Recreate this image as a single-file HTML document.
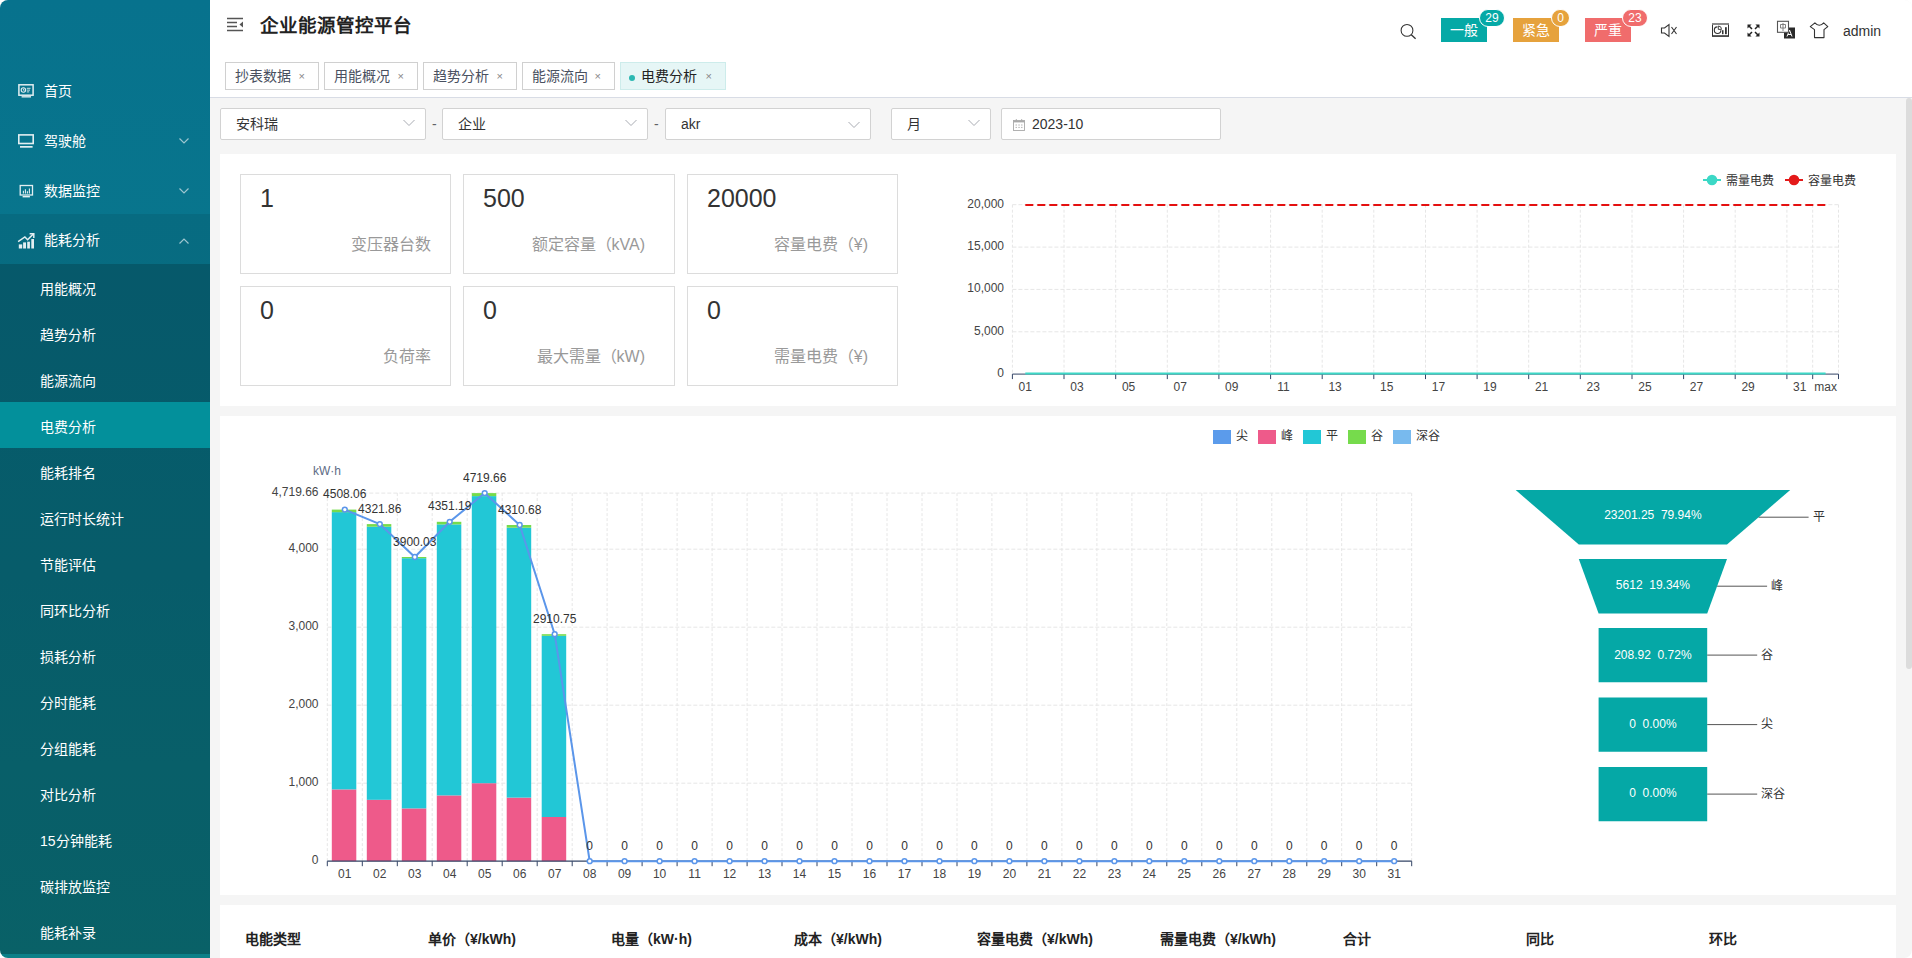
<!DOCTYPE html>
<html lang="zh-CN">
<head>
<meta charset="utf-8">
<style>
*{box-sizing:border-box;margin:0;padding:0}
html,body{width:1912px;height:958px;overflow:hidden;background:#fff}
body{font-family:"Liberation Sans",sans-serif;color:#333;position:relative}
.abs{position:absolute}
#app{position:absolute;left:0;top:0;width:1912px;height:958px;border-radius:8px;overflow:hidden;background:#f5f5f5}
/* sidebar */
#side{position:absolute;left:0;top:0;width:210px;height:958px;background:linear-gradient(180deg,#07728d 0%,#0a7a8c 60%,#0c8088 100%)}
.mi{position:absolute;left:0;width:210px;height:50px;color:#fff;font-size:14px;line-height:50px}
.mi .t{position:absolute;left:44px;top:1px}
.mi svg.ic{position:absolute;left:17px;top:19px;overflow:visible}
.mi .chev{position:absolute;left:179px;top:23px;width:10px;height:6px}
#sub{position:absolute;left:0;top:264px;width:210px;height:690px;background:rgba(0,0,0,0.24)}
.si{position:absolute;left:0;width:210px;height:46px;line-height:46px;color:#fff;font-size:14px;padding-left:40px;padding-top:2px}
.si.act{background:#03909b}
/* main */
#hdr{position:absolute;left:210px;top:0;width:1702px;height:97px;background:#fff}
#hdrline{position:absolute;left:210px;top:97px;width:1702px;height:1px;background:#d8dce5}
.tab{position:absolute;top:62px;height:28px;border:1px solid #d0d0d0;background:#fff;font-size:14px;color:#495060;line-height:26px;padding-left:9px}
.tab .x{position:absolute;right:13px;top:0;font-size:11px;color:#888}
.tab.act{background:#e6f6f6;border-color:#cdeceb;color:#222}
.sel{position:absolute;top:108px;height:32px;border:1px solid #d2d2d2;border-radius:2px;background:#fff;font-size:14px;color:#333;line-height:30px;padding-left:15px}
.dash{position:absolute;top:108px;line-height:32px;font-size:14px;color:#606266}
.card{position:absolute;left:220px;width:1676px;background:#fff}
.stat{position:absolute;width:211px;height:100px;border:1px solid #dcdcdc;background:#fff}
.stat .n{position:absolute;left:19px;top:9px;font-size:25px;color:#333}
.stat .l{position:absolute;right:19px;top:56px;font-size:16px;color:#999;white-space:nowrap}
.th{position:absolute;top:930px;font-size:14px;font-weight:bold;color:#222;line-height:18px;white-space:nowrap}
#sb{position:absolute;left:1906px;top:98px;width:6px;height:571px;border-radius:3px;background:#dcdcdc}
</style>
</head>
<body>
<div id="app">
  <div id="side">
    <div class="mi" style="top:65px">
      <svg class="ic" width="19" height="16" viewBox="0 0 19 16"><rect x="1.9" y="0.8" width="14.2" height="10.4" fill="none" stroke="#e3eef1" stroke-width="1.5"/><rect x="4.6" y="12" width="9.4" height="1.6" fill="#e3eef1" opacity="0.85"/><circle cx="6.4" cy="6" r="2.2" fill="none" stroke="#e3eef1" stroke-width="1.1"/><path d="M6.4 4.7V6.2H7.5M9.8 4.3H13.5M9.8 6.1H13M9.8 7.9H12.2" fill="none" stroke="#e3eef1" stroke-width="0.9"/></svg>
      <span class="t">首页</span>
    </div>
    <div class="mi" style="top:115px">
      <svg class="ic" width="19" height="16" viewBox="0 0 19 16"><rect x="1.8" y="0.9" width="14.4" height="8.6" fill="none" stroke="#e3eef1" stroke-width="1.6"/><rect x="3" y="12" width="12.6" height="1.7" fill="#e3eef1"/></svg>
      <span class="t">驾驶舱</span>
      <svg class="chev" viewBox="0 0 10 6"><path d="M0.5 0.5L5 5L9.5 0.5" fill="none" stroke="#9cc5cf" stroke-width="1.2"/></svg>
    </div>
    <div class="mi" style="top:165px">
      <svg class="ic" width="19" height="16" viewBox="0 0 19 16"><rect x="3.2" y="1.5" width="12.3" height="9.5" fill="none" stroke="#e3eef1" stroke-width="1.3"/><rect x="5.6" y="12" width="7.3" height="1.4" fill="#e3eef1"/><path d="M6.4 9.6V6.8M8.4 9.6V5.2M10.4 9.6V7.2M12.4 9.6V4.6" stroke="#e3eef1" stroke-width="1.1"/></svg>
      <span class="t">数据监控</span>
      <svg class="chev" viewBox="0 0 10 6"><path d="M0.5 0.5L5 5L9.5 0.5" fill="none" stroke="#9cc5cf" stroke-width="1.2"/></svg>
    </div>
    <div class="mi" style="top:214px;background:rgba(0,0,0,0.08)">
      <svg class="ic" width="19" height="17" viewBox="0 0 19 17"><rect x="1.8" y="11.4" width="3.4" height="4.1" fill="#e3eef1"/><rect x="6.1" y="9.4" width="2.9" height="6.1" fill="#e3eef1"/><rect x="10.2" y="8.7" width="2.7" height="6.8" fill="#e3eef1"/><rect x="14.3" y="6" width="2.7" height="9.5" fill="#e3eef1"/><path d="M1.1 8.7L7.9 4L10.6 6.7L16.4 0.9" fill="none" stroke="#e3eef1" stroke-width="1.5"/><path d="M12.6 0.8H16.8V5" fill="none" stroke="#e3eef1" stroke-width="1.5"/></svg>
      <span class="t">能耗分析</span>
      <svg class="chev" style="top:24px" viewBox="0 0 10 6"><path d="M0.5 5.5L5 1L9.5 5.5" fill="none" stroke="#9cc5cf" stroke-width="1.2"/></svg>
    </div>
    <div id="sub">
      <div class="si" style="top:0">用能概况</div>
      <div class="si" style="top:46px">趋势分析</div>
      <div class="si" style="top:92px">能源流向</div>
      <div class="si act" style="top:138px">电费分析</div>
      <div class="si" style="top:184px">能耗排名</div>
      <div class="si" style="top:230px">运行时长统计</div>
      <div class="si" style="top:276px">节能评估</div>
      <div class="si" style="top:322px">同环比分析</div>
      <div class="si" style="top:368px">损耗分析</div>
      <div class="si" style="top:414px">分时能耗</div>
      <div class="si" style="top:460px">分组能耗</div>
      <div class="si" style="top:506px">对比分析</div>
      <div class="si" style="top:552px">15分钟能耗</div>
      <div class="si" style="top:598px">碳排放监控</div>
      <div class="si" style="top:644px">能耗补录</div>
    </div>
  </div>

  <div id="hdr"></div>
  <div id="hdrline"></div>
  <!-- HEADER CONTENT -->
  <svg class="abs" style="left:227px;top:17px" width="17" height="15" viewBox="0 0 17 15"><path d="M0 1.5H16M0 5.5H10M0 9.5H10M0 13.5H16" stroke="#555" stroke-width="1.6"/><path d="M16 4.5L12.5 7.5L16 10.5Z" fill="#555"/></svg>
  <div class="abs" style="left:260px;top:12px;font-size:18.5px;font-weight:bold;color:#222;line-height:28px;white-space:nowrap">企业能源管控平台</div>
  <svg class="abs" style="left:1399px;top:22px" width="19" height="19" viewBox="0 0 19 19"><circle cx="8" cy="8.4" r="5.9" fill="none" stroke="#333" stroke-width="1.05"/><path d="M12.3 12.7L16.6 16.8" stroke="#333" stroke-width="1.3"/></svg>
  <div class="abs badge" style="left:1441px;top:18px;width:46px;height:24px;background:#05a9a6;color:#fff;font-size:14px;line-height:24px;text-align:center">一般</div>
  <div class="abs" style="left:1479px;top:9px;width:26px;height:18px;border-radius:9px;border:1px solid #fff;background:#05a9a6;color:#fff;font-size:12px;line-height:16px;text-align:center">29</div>
  <div class="abs badge" style="left:1513px;top:18px;width:46px;height:24px;background:#e6a23c;color:#fff;font-size:14px;line-height:24px;text-align:center">紧急</div>
  <div class="abs" style="left:1551px;top:9px;width:19px;height:18px;border-radius:9px;border:1px solid #fff;background:#e6a23c;color:#fff;font-size:12px;line-height:16px;text-align:center">0</div>
  <div class="abs badge" style="left:1585px;top:18px;width:46px;height:24px;background:#f06c6c;color:#fff;font-size:14px;line-height:24px;text-align:center">严重</div>
  <div class="abs" style="left:1622px;top:9px;width:26px;height:18px;border-radius:9px;border:1px solid #fff;background:#f06c6c;color:#fff;font-size:12px;line-height:16px;text-align:center">23</div>
  <svg class="abs" style="left:1660px;top:23px" width="19" height="15" viewBox="0 0 19 15"><path d="M1.5 5H4.5L9 1.5V13.5L4.5 10H1.5Z" fill="none" stroke="#333" stroke-width="1.1"/><path d="M11.5 4L16.5 11M16.5 4L11.5 11" stroke="#333" stroke-width="1.1"/></svg>
  <svg class="abs" style="left:1712px;top:23px" width="17" height="14" viewBox="0 0 17 14"><rect x="0.5" y="1" width="16" height="12" fill="none" stroke="#333" stroke-width="1"/><path d="M0 1H17" stroke="#888" stroke-width="1.6"/><path d="M0 13.1H17" stroke="#333" stroke-width="1.3"/><path d="M5.4 3.9A3.3 3.3 0 1 0 8.9 7.3" fill="none" stroke="#333" stroke-width="1.1"/><path d="M6.3 3V6.4H9.5A3.3 3.3 0 0 0 6.3 3Z" fill="none" stroke="#333" stroke-width="0.9"/><rect x="10" y="7.2" width="1.5" height="4" fill="#333"/><rect x="13" y="4.2" width="1.8" height="7" fill="#333"/></svg>
  <svg class="abs" style="left:1747px;top:24px" width="13" height="13" viewBox="0 0 13 13"><path d="M0.5 0.5H4.6L0.5 4.6ZM12.5 0.5H8.4L12.5 4.6ZM0.5 12.5H4.6L0.5 8.4ZM12.5 12.5H8.4L12.5 8.4Z" fill="#222"/><path d="M1.5 1.5L5 5M11.5 1.5L8 5M1.5 11.5L5 8M11.5 11.5L8 8" stroke="#222" stroke-width="1.5"/></svg>
  <svg class="abs" style="left:1776px;top:20px" width="21" height="20" viewBox="0 0 21 20"><rect x="8" y="7.5" width="11" height="11" fill="#2a2a2a"/><path d="M11 16.5L13.5 10L16 16.5M12 14.5H15" fill="none" stroke="#fff" stroke-width="1"/><rect x="1.5" y="1.3" width="11" height="11" fill="#fff" stroke="#555" stroke-width="1.1"/><path d="M4.5 4.5H9.5V8H4.5ZM7 3V11" fill="none" stroke="#777" stroke-width="0.9"/></svg>
  <svg class="abs" style="left:1809px;top:21px" width="21" height="18" viewBox="0 0 21 18"><path d="M5.9 1.8C7.5 3.5 8.8 4.3 10.3 4.3C11.8 4.3 13.1 3.5 14.7 1.8L18.8 5.6L15 8.6V16.6H5.5V8.6L1.3 5.6Z" fill="none" stroke="#333" stroke-width="1.1" stroke-linejoin="round"/></svg>
  <div class="abs" style="left:1843px;top:22px;font-size:14px;color:#333;line-height:18px">admin</div>

  <!-- TABS -->
  <div class="tab" style="left:225px;width:94px">抄表数据<span class="x">×</span></div>
  <div class="tab" style="left:324px;width:94px">用能概况<span class="x">×</span></div>
  <div class="tab" style="left:423px;width:94px">趋势分析<span class="x">×</span></div>
  <div class="tab" style="left:522px;width:93px">能源流向<span class="x">×</span></div>
  <div class="tab act" style="left:620px;width:106px;padding-left:20px"><span class="abs" style="left:8px;top:12px;width:6px;height:6px;border-radius:3px;background:#2bb8b2"></span>电费分析<span class="x">×</span></div>

  <!-- FILTERS -->
  <div class="sel" style="left:220px;width:206px">安科瑞<svg class="abs" style="left:182px;top:10px" width="12" height="8" viewBox="0 0 12 8"><path d="M0.5 1L6 6.5L11.5 1" fill="none" stroke="#a8abb2" stroke-width="1"/></svg></div>
  <div class="dash" style="left:432px">-</div>
  <div class="sel" style="left:442px;width:206px">企业<svg class="abs" style="left:182px;top:10px" width="12" height="8" viewBox="0 0 12 8"><path d="M0.5 1L6 6.5L11.5 1" fill="none" stroke="#a8abb2" stroke-width="1"/></svg></div>
  <div class="dash" style="left:654px">-</div>
  <div class="sel" style="left:665px;width:206px">akr<svg class="abs" style="left:182px;top:12px" width="12" height="8" viewBox="0 0 12 8"><path d="M0.5 1L6 6.5L11.5 1" fill="none" stroke="#a8abb2" stroke-width="1"/></svg></div>
  <div class="sel" style="left:891px;width:100px">月<svg class="abs" style="left:76px;top:10px" width="12" height="8" viewBox="0 0 12 8"><path d="M0.5 1L6 6.5L11.5 1" fill="none" stroke="#a8abb2" stroke-width="1"/></svg></div>
  <div class="sel" style="left:1001px;width:220px;padding-left:30px">2023-10<svg class="abs" style="left:10px;top:9px" width="14" height="14" viewBox="0 0 14 14"><rect x="1.5" y="2.5" width="11" height="10" fill="none" stroke="#a9a9a9" stroke-width="0.9"/><path d="M1.5 3.6H12.5" stroke="#a9a9a9" stroke-width="1.6"/><path d="M4.3 1V3M9.7 1V3" stroke="#a9a9a9" stroke-width="0.9"/><path d="M3.5 7H5M6.3 7H7.8M9 7H10.5M3.5 9.4H5M6.3 9.4H7.8M9 9.4H10.5" stroke="#b5b5b5" stroke-width="1"/></svg></div>

  <div class="card" style="top:154px;height:252px"></div>
  <!-- STATS -->
  <div class="stat" style="left:240px;top:174px"><span class="n">1</span><span class="l">变压器台数</span></div>
  <div class="stat" style="left:463px;top:174px;width:212px"><span class="n">500</span><span class="l" style="right:29px">额定容量（kVA)</span></div>
  <div class="stat" style="left:687px;top:174px"><span class="n">20000</span><span class="l" style="right:29px">容量电费（¥)</span></div>
  <div class="stat" style="left:240px;top:286px"><span class="n">0</span><span class="l">负荷率</span></div>
  <div class="stat" style="left:463px;top:286px;width:212px"><span class="n">0</span><span class="l" style="right:29px">最大需量（kW)</span></div>
  <div class="stat" style="left:687px;top:286px"><span class="n">0</span><span class="l" style="right:29px">需量电费（¥)</span></div>
  <!-- LINECHART -->
<svg class="abs" style="left:920px;top:154px" width="976" height="252" viewBox="920 154 976 252">
<path d="M1012.4 331.8H1838.5" stroke="#e6e6e6" stroke-width="1" stroke-dasharray="4 2"/>
<path d="M1012.4 289.4H1838.5" stroke="#e6e6e6" stroke-width="1" stroke-dasharray="4 2"/>
<path d="M1012.4 247.1H1838.5" stroke="#e6e6e6" stroke-width="1" stroke-dasharray="4 2"/>
<path d="M1012.4 204.7H1838.5" stroke="#e6e6e6" stroke-width="1" stroke-dasharray="4 2"/>
<path d="M1064.0 204.7V374.1" stroke="#e6e6e6" stroke-width="1" stroke-dasharray="3 2"/>
<path d="M1115.7 204.7V374.1" stroke="#e6e6e6" stroke-width="1" stroke-dasharray="3 2"/>
<path d="M1167.3 204.7V374.1" stroke="#e6e6e6" stroke-width="1" stroke-dasharray="3 2"/>
<path d="M1218.9 204.7V374.1" stroke="#e6e6e6" stroke-width="1" stroke-dasharray="3 2"/>
<path d="M1270.6 204.7V374.1" stroke="#e6e6e6" stroke-width="1" stroke-dasharray="3 2"/>
<path d="M1322.2 204.7V374.1" stroke="#e6e6e6" stroke-width="1" stroke-dasharray="3 2"/>
<path d="M1373.8 204.7V374.1" stroke="#e6e6e6" stroke-width="1" stroke-dasharray="3 2"/>
<path d="M1425.5 204.7V374.1" stroke="#e6e6e6" stroke-width="1" stroke-dasharray="3 2"/>
<path d="M1477.1 204.7V374.1" stroke="#e6e6e6" stroke-width="1" stroke-dasharray="3 2"/>
<path d="M1528.7 204.7V374.1" stroke="#e6e6e6" stroke-width="1" stroke-dasharray="3 2"/>
<path d="M1580.3 204.7V374.1" stroke="#e6e6e6" stroke-width="1" stroke-dasharray="3 2"/>
<path d="M1632.0 204.7V374.1" stroke="#e6e6e6" stroke-width="1" stroke-dasharray="3 2"/>
<path d="M1683.6 204.7V374.1" stroke="#e6e6e6" stroke-width="1" stroke-dasharray="3 2"/>
<path d="M1735.2 204.7V374.1" stroke="#e6e6e6" stroke-width="1" stroke-dasharray="3 2"/>
<path d="M1786.9 204.7V374.1" stroke="#e6e6e6" stroke-width="1" stroke-dasharray="3 2"/>
<path d="M1812.7 204.7V374.1" stroke="#e6e6e6" stroke-width="1" stroke-dasharray="3 2"/>
<path d="M1838.5 204.7V374.1" stroke="#e6e6e6" stroke-width="1" stroke-dasharray="3 2"/>
<path d="M1012.4 204.7V374.1" stroke="#e6e6e6" stroke-width="1" stroke-dasharray="3 2"/>
<path d="M1012.4 374.1H1838.5" stroke="#334466" stroke-width="1"/>
<path d="M1012.4 374.1V379.1" stroke="#334466" stroke-width="1"/>
<path d="M1064.0 374.1V379.1" stroke="#334466" stroke-width="1"/>
<path d="M1115.7 374.1V379.1" stroke="#334466" stroke-width="1"/>
<path d="M1167.3 374.1V379.1" stroke="#334466" stroke-width="1"/>
<path d="M1218.9 374.1V379.1" stroke="#334466" stroke-width="1"/>
<path d="M1270.6 374.1V379.1" stroke="#334466" stroke-width="1"/>
<path d="M1322.2 374.1V379.1" stroke="#334466" stroke-width="1"/>
<path d="M1373.8 374.1V379.1" stroke="#334466" stroke-width="1"/>
<path d="M1425.5 374.1V379.1" stroke="#334466" stroke-width="1"/>
<path d="M1477.1 374.1V379.1" stroke="#334466" stroke-width="1"/>
<path d="M1528.7 374.1V379.1" stroke="#334466" stroke-width="1"/>
<path d="M1580.3 374.1V379.1" stroke="#334466" stroke-width="1"/>
<path d="M1632.0 374.1V379.1" stroke="#334466" stroke-width="1"/>
<path d="M1683.6 374.1V379.1" stroke="#334466" stroke-width="1"/>
<path d="M1735.2 374.1V379.1" stroke="#334466" stroke-width="1"/>
<path d="M1786.9 374.1V379.1" stroke="#334466" stroke-width="1"/>
<path d="M1812.7 374.1V379.1" stroke="#334466" stroke-width="1"/>
<path d="M1838.5 374.1V379.1" stroke="#334466" stroke-width="1"/>
<text x="1004" y="377.1" text-anchor="end" font-size="12" fill="#444">0</text>
<text x="1004" y="334.8" text-anchor="end" font-size="12" fill="#444">5,000</text>
<text x="1004" y="292.4" text-anchor="end" font-size="12" fill="#444">10,000</text>
<text x="1004" y="250.1" text-anchor="end" font-size="12" fill="#444">15,000</text>
<text x="1004" y="207.7" text-anchor="end" font-size="12" fill="#444">20,000</text>
<text x="1025.3" y="390.5" text-anchor="middle" font-size="12" fill="#444">01</text>
<text x="1076.9" y="390.5" text-anchor="middle" font-size="12" fill="#444">03</text>
<text x="1128.6" y="390.5" text-anchor="middle" font-size="12" fill="#444">05</text>
<text x="1180.2" y="390.5" text-anchor="middle" font-size="12" fill="#444">07</text>
<text x="1231.8" y="390.5" text-anchor="middle" font-size="12" fill="#444">09</text>
<text x="1283.5" y="390.5" text-anchor="middle" font-size="12" fill="#444">11</text>
<text x="1335.1" y="390.5" text-anchor="middle" font-size="12" fill="#444">13</text>
<text x="1386.7" y="390.5" text-anchor="middle" font-size="12" fill="#444">15</text>
<text x="1438.4" y="390.5" text-anchor="middle" font-size="12" fill="#444">17</text>
<text x="1490.0" y="390.5" text-anchor="middle" font-size="12" fill="#444">19</text>
<text x="1541.6" y="390.5" text-anchor="middle" font-size="12" fill="#444">21</text>
<text x="1593.3" y="390.5" text-anchor="middle" font-size="12" fill="#444">23</text>
<text x="1644.9" y="390.5" text-anchor="middle" font-size="12" fill="#444">25</text>
<text x="1696.5" y="390.5" text-anchor="middle" font-size="12" fill="#444">27</text>
<text x="1748.1" y="390.5" text-anchor="middle" font-size="12" fill="#444">29</text>
<text x="1799.8" y="390.5" text-anchor="middle" font-size="12" fill="#444">31</text>
<text x="1825.6" y="390.5" text-anchor="middle" font-size="12" fill="#444">max</text>
<path d="M1025.3 204.9H1825.6" stroke="#e41010" stroke-width="2" stroke-dasharray="8 4"/>
<path d="M1025.3 373.6H1825.6" stroke="#3cd8c6" stroke-width="2"/>
<path d="M1703 180H1721" stroke="#3cd8c6" stroke-width="2"/><circle cx="1712" cy="180" r="5.3" fill="#3cd8c6"/>
<text x="1726" y="185" font-size="12" fill="#333">需量电费</text>
<path d="M1785 180H1803" stroke="#e41a1a" stroke-width="2"/><circle cx="1794" cy="180" r="5.3" fill="#e41a1a"/>
<text x="1808" y="185" font-size="12" fill="#333">容量电费</text>
</svg>
  <!-- /LINECHART -->
  <div class="card" style="top:416px;height:479px"></div>
  <!-- BARCHART -->
<svg class="abs" style="left:220px;top:416px" width="1676" height="479" viewBox="220 416 1676 479" font-family="Liberation Sans, sans-serif">
<path d="M327.3 783.2H1411.7" stroke="#e6e6e6" stroke-width="1" stroke-dasharray="4 2"/>
<path d="M327.3 705.2H1411.7" stroke="#e6e6e6" stroke-width="1" stroke-dasharray="4 2"/>
<path d="M327.3 627.2H1411.7" stroke="#e6e6e6" stroke-width="1" stroke-dasharray="4 2"/>
<path d="M327.3 549.2H1411.7" stroke="#e6e6e6" stroke-width="1" stroke-dasharray="4 2"/>
<path d="M327.3 493.1H1411.7" stroke="#e6e6e6" stroke-width="1" stroke-dasharray="4 2"/>
<path d="M327.3 493.1V861.2" stroke="#e6e6e6" stroke-width="1" stroke-dasharray="3 2"/>
<path d="M362.3 493.1V861.2" stroke="#e6e6e6" stroke-width="1" stroke-dasharray="3 2"/>
<path d="M397.3 493.1V861.2" stroke="#e6e6e6" stroke-width="1" stroke-dasharray="3 2"/>
<path d="M432.2 493.1V861.2" stroke="#e6e6e6" stroke-width="1" stroke-dasharray="3 2"/>
<path d="M467.2 493.1V861.2" stroke="#e6e6e6" stroke-width="1" stroke-dasharray="3 2"/>
<path d="M502.2 493.1V861.2" stroke="#e6e6e6" stroke-width="1" stroke-dasharray="3 2"/>
<path d="M537.2 493.1V861.2" stroke="#e6e6e6" stroke-width="1" stroke-dasharray="3 2"/>
<path d="M572.2 493.1V861.2" stroke="#e6e6e6" stroke-width="1" stroke-dasharray="3 2"/>
<path d="M607.1 493.1V861.2" stroke="#e6e6e6" stroke-width="1" stroke-dasharray="3 2"/>
<path d="M642.1 493.1V861.2" stroke="#e6e6e6" stroke-width="1" stroke-dasharray="3 2"/>
<path d="M677.1 493.1V861.2" stroke="#e6e6e6" stroke-width="1" stroke-dasharray="3 2"/>
<path d="M712.1 493.1V861.2" stroke="#e6e6e6" stroke-width="1" stroke-dasharray="3 2"/>
<path d="M747.1 493.1V861.2" stroke="#e6e6e6" stroke-width="1" stroke-dasharray="3 2"/>
<path d="M782.0 493.1V861.2" stroke="#e6e6e6" stroke-width="1" stroke-dasharray="3 2"/>
<path d="M817.0 493.1V861.2" stroke="#e6e6e6" stroke-width="1" stroke-dasharray="3 2"/>
<path d="M852.0 493.1V861.2" stroke="#e6e6e6" stroke-width="1" stroke-dasharray="3 2"/>
<path d="M887.0 493.1V861.2" stroke="#e6e6e6" stroke-width="1" stroke-dasharray="3 2"/>
<path d="M922.0 493.1V861.2" stroke="#e6e6e6" stroke-width="1" stroke-dasharray="3 2"/>
<path d="M957.0 493.1V861.2" stroke="#e6e6e6" stroke-width="1" stroke-dasharray="3 2"/>
<path d="M991.9 493.1V861.2" stroke="#e6e6e6" stroke-width="1" stroke-dasharray="3 2"/>
<path d="M1026.9 493.1V861.2" stroke="#e6e6e6" stroke-width="1" stroke-dasharray="3 2"/>
<path d="M1061.9 493.1V861.2" stroke="#e6e6e6" stroke-width="1" stroke-dasharray="3 2"/>
<path d="M1096.9 493.1V861.2" stroke="#e6e6e6" stroke-width="1" stroke-dasharray="3 2"/>
<path d="M1131.9 493.1V861.2" stroke="#e6e6e6" stroke-width="1" stroke-dasharray="3 2"/>
<path d="M1166.8 493.1V861.2" stroke="#e6e6e6" stroke-width="1" stroke-dasharray="3 2"/>
<path d="M1201.8 493.1V861.2" stroke="#e6e6e6" stroke-width="1" stroke-dasharray="3 2"/>
<path d="M1236.8 493.1V861.2" stroke="#e6e6e6" stroke-width="1" stroke-dasharray="3 2"/>
<path d="M1271.8 493.1V861.2" stroke="#e6e6e6" stroke-width="1" stroke-dasharray="3 2"/>
<path d="M1306.8 493.1V861.2" stroke="#e6e6e6" stroke-width="1" stroke-dasharray="3 2"/>
<path d="M1341.7 493.1V861.2" stroke="#e6e6e6" stroke-width="1" stroke-dasharray="3 2"/>
<path d="M1376.7 493.1V861.2" stroke="#e6e6e6" stroke-width="1" stroke-dasharray="3 2"/>
<path d="M1411.7 493.1V861.2" stroke="#e6e6e6" stroke-width="1" stroke-dasharray="3 2"/>
<text x="318.5" y="864.4" text-anchor="end" font-size="12" fill="#444">0</text>
<text x="318.5" y="786.4" text-anchor="end" font-size="12" fill="#444">1,000</text>
<text x="318.5" y="708.4" text-anchor="end" font-size="12" fill="#444">2,000</text>
<text x="318.5" y="630.4" text-anchor="end" font-size="12" fill="#444">3,000</text>
<text x="318.5" y="552.4" text-anchor="end" font-size="12" fill="#444">4,000</text>
<text x="318.5" y="496.3" text-anchor="end" font-size="12" fill="#444">4,719.66</text>
<text x="327" y="475" text-anchor="middle" font-size="12" fill="#5d6b85">kW·h</text>
<rect x="331.8" y="789.4" width="24.5" height="71.8" fill="#ee5a8a"/>
<rect x="331.8" y="512.1" width="24.5" height="277.3" fill="#22c7d6"/>
<rect x="331.8" y="509.6" width="24.5" height="2.6" fill="#76db4c"/>
<rect x="366.8" y="799.7" width="24.5" height="61.5" fill="#ee5a8a"/>
<rect x="366.8" y="526.7" width="24.5" height="273.1" fill="#22c7d6"/>
<rect x="366.8" y="524.1" width="24.5" height="2.6" fill="#76db4c"/>
<rect x="401.8" y="808.4" width="24.5" height="52.8" fill="#ee5a8a"/>
<rect x="401.8" y="558.2" width="24.5" height="250.2" fill="#22c7d6"/>
<rect x="401.8" y="557.0" width="24.5" height="1.2" fill="#76db4c"/>
<rect x="436.8" y="795.4" width="24.5" height="65.8" fill="#ee5a8a"/>
<rect x="436.8" y="524.4" width="24.5" height="271.0" fill="#22c7d6"/>
<rect x="436.8" y="521.8" width="24.5" height="2.6" fill="#76db4c"/>
<rect x="471.8" y="783.2" width="24.5" height="78.0" fill="#ee5a8a"/>
<rect x="471.8" y="496.1" width="24.5" height="287.1" fill="#22c7d6"/>
<rect x="471.8" y="493.1" width="24.5" height="3.0" fill="#76db4c"/>
<rect x="506.7" y="797.6" width="24.5" height="63.6" fill="#ee5a8a"/>
<rect x="506.7" y="527.7" width="24.5" height="269.9" fill="#22c7d6"/>
<rect x="506.7" y="525.0" width="24.5" height="2.7" fill="#76db4c"/>
<rect x="541.7" y="817.0" width="24.5" height="44.2" fill="#ee5a8a"/>
<rect x="541.7" y="635.8" width="24.5" height="181.2" fill="#22c7d6"/>
<rect x="541.7" y="634.2" width="24.5" height="1.6" fill="#76db4c"/>
<path d="M327.3 861.2H1411.7" stroke="#334466" stroke-width="1.2"/>
<path d="M327.3 861.2V866.2" stroke="#334466" stroke-width="1"/>
<path d="M362.3 861.2V866.2" stroke="#334466" stroke-width="1"/>
<path d="M397.3 861.2V866.2" stroke="#334466" stroke-width="1"/>
<path d="M432.2 861.2V866.2" stroke="#334466" stroke-width="1"/>
<path d="M467.2 861.2V866.2" stroke="#334466" stroke-width="1"/>
<path d="M502.2 861.2V866.2" stroke="#334466" stroke-width="1"/>
<path d="M537.2 861.2V866.2" stroke="#334466" stroke-width="1"/>
<path d="M572.2 861.2V866.2" stroke="#334466" stroke-width="1"/>
<path d="M607.1 861.2V866.2" stroke="#334466" stroke-width="1"/>
<path d="M642.1 861.2V866.2" stroke="#334466" stroke-width="1"/>
<path d="M677.1 861.2V866.2" stroke="#334466" stroke-width="1"/>
<path d="M712.1 861.2V866.2" stroke="#334466" stroke-width="1"/>
<path d="M747.1 861.2V866.2" stroke="#334466" stroke-width="1"/>
<path d="M782.0 861.2V866.2" stroke="#334466" stroke-width="1"/>
<path d="M817.0 861.2V866.2" stroke="#334466" stroke-width="1"/>
<path d="M852.0 861.2V866.2" stroke="#334466" stroke-width="1"/>
<path d="M887.0 861.2V866.2" stroke="#334466" stroke-width="1"/>
<path d="M922.0 861.2V866.2" stroke="#334466" stroke-width="1"/>
<path d="M957.0 861.2V866.2" stroke="#334466" stroke-width="1"/>
<path d="M991.9 861.2V866.2" stroke="#334466" stroke-width="1"/>
<path d="M1026.9 861.2V866.2" stroke="#334466" stroke-width="1"/>
<path d="M1061.9 861.2V866.2" stroke="#334466" stroke-width="1"/>
<path d="M1096.9 861.2V866.2" stroke="#334466" stroke-width="1"/>
<path d="M1131.9 861.2V866.2" stroke="#334466" stroke-width="1"/>
<path d="M1166.8 861.2V866.2" stroke="#334466" stroke-width="1"/>
<path d="M1201.8 861.2V866.2" stroke="#334466" stroke-width="1"/>
<path d="M1236.8 861.2V866.2" stroke="#334466" stroke-width="1"/>
<path d="M1271.8 861.2V866.2" stroke="#334466" stroke-width="1"/>
<path d="M1306.8 861.2V866.2" stroke="#334466" stroke-width="1"/>
<path d="M1341.7 861.2V866.2" stroke="#334466" stroke-width="1"/>
<path d="M1376.7 861.2V866.2" stroke="#334466" stroke-width="1"/>
<path d="M1411.7 861.2V866.2" stroke="#334466" stroke-width="1"/>
<text x="344.8" y="878" text-anchor="middle" font-size="12" fill="#444">01</text>
<text x="379.8" y="878" text-anchor="middle" font-size="12" fill="#444">02</text>
<text x="414.8" y="878" text-anchor="middle" font-size="12" fill="#444">03</text>
<text x="449.7" y="878" text-anchor="middle" font-size="12" fill="#444">04</text>
<text x="484.7" y="878" text-anchor="middle" font-size="12" fill="#444">05</text>
<text x="519.7" y="878" text-anchor="middle" font-size="12" fill="#444">06</text>
<text x="554.7" y="878" text-anchor="middle" font-size="12" fill="#444">07</text>
<text x="589.7" y="878" text-anchor="middle" font-size="12" fill="#444">08</text>
<text x="624.6" y="878" text-anchor="middle" font-size="12" fill="#444">09</text>
<text x="659.6" y="878" text-anchor="middle" font-size="12" fill="#444">10</text>
<text x="694.6" y="878" text-anchor="middle" font-size="12" fill="#444">11</text>
<text x="729.6" y="878" text-anchor="middle" font-size="12" fill="#444">12</text>
<text x="764.6" y="878" text-anchor="middle" font-size="12" fill="#444">13</text>
<text x="799.5" y="878" text-anchor="middle" font-size="12" fill="#444">14</text>
<text x="834.5" y="878" text-anchor="middle" font-size="12" fill="#444">15</text>
<text x="869.5" y="878" text-anchor="middle" font-size="12" fill="#444">16</text>
<text x="904.5" y="878" text-anchor="middle" font-size="12" fill="#444">17</text>
<text x="939.5" y="878" text-anchor="middle" font-size="12" fill="#444">18</text>
<text x="974.4" y="878" text-anchor="middle" font-size="12" fill="#444">19</text>
<text x="1009.4" y="878" text-anchor="middle" font-size="12" fill="#444">20</text>
<text x="1044.4" y="878" text-anchor="middle" font-size="12" fill="#444">21</text>
<text x="1079.4" y="878" text-anchor="middle" font-size="12" fill="#444">22</text>
<text x="1114.4" y="878" text-anchor="middle" font-size="12" fill="#444">23</text>
<text x="1149.3" y="878" text-anchor="middle" font-size="12" fill="#444">24</text>
<text x="1184.3" y="878" text-anchor="middle" font-size="12" fill="#444">25</text>
<text x="1219.3" y="878" text-anchor="middle" font-size="12" fill="#444">26</text>
<text x="1254.3" y="878" text-anchor="middle" font-size="12" fill="#444">27</text>
<text x="1289.3" y="878" text-anchor="middle" font-size="12" fill="#444">28</text>
<text x="1324.2" y="878" text-anchor="middle" font-size="12" fill="#444">29</text>
<text x="1359.2" y="878" text-anchor="middle" font-size="12" fill="#444">30</text>
<text x="1394.2" y="878" text-anchor="middle" font-size="12" fill="#444">31</text>
<path d="M344.8 509.6 L379.8 524.1 L414.8 557.0 L449.7 521.8 L484.7 493.1 L519.7 525.0 L554.7 634.2 L589.7 861.2 L624.6 861.2 L659.6 861.2 L694.6 861.2 L729.6 861.2 L764.6 861.2 L799.5 861.2 L834.5 861.2 L869.5 861.2 L904.5 861.2 L939.5 861.2 L974.4 861.2 L1009.4 861.2 L1044.4 861.2 L1079.4 861.2 L1114.4 861.2 L1149.3 861.2 L1184.3 861.2 L1219.3 861.2 L1254.3 861.2 L1289.3 861.2 L1324.2 861.2 L1359.2 861.2 L1394.2 861.2" fill="none" stroke="#5b96ea" stroke-width="2"/>
<circle cx="344.8" cy="509.6" r="2.4" fill="#fff" stroke="#5b96ea" stroke-width="1.5"/>
<circle cx="379.8" cy="524.1" r="2.4" fill="#fff" stroke="#5b96ea" stroke-width="1.5"/>
<circle cx="414.8" cy="557.0" r="2.4" fill="#fff" stroke="#5b96ea" stroke-width="1.5"/>
<circle cx="449.7" cy="521.8" r="2.4" fill="#fff" stroke="#5b96ea" stroke-width="1.5"/>
<circle cx="484.7" cy="493.1" r="2.4" fill="#fff" stroke="#5b96ea" stroke-width="1.5"/>
<circle cx="519.7" cy="525.0" r="2.4" fill="#fff" stroke="#5b96ea" stroke-width="1.5"/>
<circle cx="554.7" cy="634.2" r="2.4" fill="#fff" stroke="#5b96ea" stroke-width="1.5"/>
<circle cx="589.7" cy="861.2" r="2.4" fill="#fff" stroke="#5b96ea" stroke-width="1.5"/>
<circle cx="624.6" cy="861.2" r="2.4" fill="#fff" stroke="#5b96ea" stroke-width="1.5"/>
<circle cx="659.6" cy="861.2" r="2.4" fill="#fff" stroke="#5b96ea" stroke-width="1.5"/>
<circle cx="694.6" cy="861.2" r="2.4" fill="#fff" stroke="#5b96ea" stroke-width="1.5"/>
<circle cx="729.6" cy="861.2" r="2.4" fill="#fff" stroke="#5b96ea" stroke-width="1.5"/>
<circle cx="764.6" cy="861.2" r="2.4" fill="#fff" stroke="#5b96ea" stroke-width="1.5"/>
<circle cx="799.5" cy="861.2" r="2.4" fill="#fff" stroke="#5b96ea" stroke-width="1.5"/>
<circle cx="834.5" cy="861.2" r="2.4" fill="#fff" stroke="#5b96ea" stroke-width="1.5"/>
<circle cx="869.5" cy="861.2" r="2.4" fill="#fff" stroke="#5b96ea" stroke-width="1.5"/>
<circle cx="904.5" cy="861.2" r="2.4" fill="#fff" stroke="#5b96ea" stroke-width="1.5"/>
<circle cx="939.5" cy="861.2" r="2.4" fill="#fff" stroke="#5b96ea" stroke-width="1.5"/>
<circle cx="974.4" cy="861.2" r="2.4" fill="#fff" stroke="#5b96ea" stroke-width="1.5"/>
<circle cx="1009.4" cy="861.2" r="2.4" fill="#fff" stroke="#5b96ea" stroke-width="1.5"/>
<circle cx="1044.4" cy="861.2" r="2.4" fill="#fff" stroke="#5b96ea" stroke-width="1.5"/>
<circle cx="1079.4" cy="861.2" r="2.4" fill="#fff" stroke="#5b96ea" stroke-width="1.5"/>
<circle cx="1114.4" cy="861.2" r="2.4" fill="#fff" stroke="#5b96ea" stroke-width="1.5"/>
<circle cx="1149.3" cy="861.2" r="2.4" fill="#fff" stroke="#5b96ea" stroke-width="1.5"/>
<circle cx="1184.3" cy="861.2" r="2.4" fill="#fff" stroke="#5b96ea" stroke-width="1.5"/>
<circle cx="1219.3" cy="861.2" r="2.4" fill="#fff" stroke="#5b96ea" stroke-width="1.5"/>
<circle cx="1254.3" cy="861.2" r="2.4" fill="#fff" stroke="#5b96ea" stroke-width="1.5"/>
<circle cx="1289.3" cy="861.2" r="2.4" fill="#fff" stroke="#5b96ea" stroke-width="1.5"/>
<circle cx="1324.2" cy="861.2" r="2.4" fill="#fff" stroke="#5b96ea" stroke-width="1.5"/>
<circle cx="1359.2" cy="861.2" r="2.4" fill="#fff" stroke="#5b96ea" stroke-width="1.5"/>
<circle cx="1394.2" cy="861.2" r="2.4" fill="#fff" stroke="#5b96ea" stroke-width="1.5"/>
<text x="344.8" y="498.1" text-anchor="middle" font-size="12" fill="#333">4508.06</text>
<text x="379.8" y="512.6" text-anchor="middle" font-size="12" fill="#333">4321.86</text>
<text x="414.8" y="545.5" text-anchor="middle" font-size="12" fill="#333">3900.03</text>
<text x="449.7" y="510.3" text-anchor="middle" font-size="12" fill="#333">4351.19</text>
<text x="484.7" y="481.6" text-anchor="middle" font-size="12" fill="#333">4719.66</text>
<text x="519.7" y="513.5" text-anchor="middle" font-size="12" fill="#333">4310.68</text>
<text x="554.7" y="622.7" text-anchor="middle" font-size="12" fill="#333">2910.75</text>
<text x="589.7" y="849.7" text-anchor="middle" font-size="12" fill="#333">0</text>
<text x="624.6" y="849.7" text-anchor="middle" font-size="12" fill="#333">0</text>
<text x="659.6" y="849.7" text-anchor="middle" font-size="12" fill="#333">0</text>
<text x="694.6" y="849.7" text-anchor="middle" font-size="12" fill="#333">0</text>
<text x="729.6" y="849.7" text-anchor="middle" font-size="12" fill="#333">0</text>
<text x="764.6" y="849.7" text-anchor="middle" font-size="12" fill="#333">0</text>
<text x="799.5" y="849.7" text-anchor="middle" font-size="12" fill="#333">0</text>
<text x="834.5" y="849.7" text-anchor="middle" font-size="12" fill="#333">0</text>
<text x="869.5" y="849.7" text-anchor="middle" font-size="12" fill="#333">0</text>
<text x="904.5" y="849.7" text-anchor="middle" font-size="12" fill="#333">0</text>
<text x="939.5" y="849.7" text-anchor="middle" font-size="12" fill="#333">0</text>
<text x="974.4" y="849.7" text-anchor="middle" font-size="12" fill="#333">0</text>
<text x="1009.4" y="849.7" text-anchor="middle" font-size="12" fill="#333">0</text>
<text x="1044.4" y="849.7" text-anchor="middle" font-size="12" fill="#333">0</text>
<text x="1079.4" y="849.7" text-anchor="middle" font-size="12" fill="#333">0</text>
<text x="1114.4" y="849.7" text-anchor="middle" font-size="12" fill="#333">0</text>
<text x="1149.3" y="849.7" text-anchor="middle" font-size="12" fill="#333">0</text>
<text x="1184.3" y="849.7" text-anchor="middle" font-size="12" fill="#333">0</text>
<text x="1219.3" y="849.7" text-anchor="middle" font-size="12" fill="#333">0</text>
<text x="1254.3" y="849.7" text-anchor="middle" font-size="12" fill="#333">0</text>
<text x="1289.3" y="849.7" text-anchor="middle" font-size="12" fill="#333">0</text>
<text x="1324.2" y="849.7" text-anchor="middle" font-size="12" fill="#333">0</text>
<text x="1359.2" y="849.7" text-anchor="middle" font-size="12" fill="#333">0</text>
<text x="1394.2" y="849.7" text-anchor="middle" font-size="12" fill="#333">0</text>
<rect x="1213" y="430" width="18" height="14" fill="#5b9beb"/>
<text x="1236" y="440" font-size="12" fill="#333">尖</text>
<rect x="1258" y="430" width="18" height="14" fill="#ee5a8a"/>
<text x="1281" y="440" font-size="12" fill="#333">峰</text>
<rect x="1303" y="430" width="18" height="14" fill="#22c7d6"/>
<text x="1326" y="440" font-size="12" fill="#333">平</text>
<rect x="1348" y="430" width="18" height="14" fill="#76db4c"/>
<text x="1371" y="440" font-size="12" fill="#333">谷</text>
<rect x="1393" y="430" width="18" height="14" fill="#78baee"/>
<text x="1416" y="440" font-size="12" fill="#333">深谷</text>
</svg>
  <!-- /BARCHART -->
  <!-- FUNNEL -->
<svg class="abs" style="left:1500px;top:470px" width="360" height="370" viewBox="1500 470 360 370" font-family="Liberation Sans, sans-serif">
<path d="M1515.7 490.1L1790.2 490.1L1727.0 544.4L1578.8 544.4Z" fill="#05a8a6"/>
<path d="M1758.6 517.2H1808.6" stroke="#555" stroke-width="1"/>
<text x="1812.6" y="520.9" font-size="12" fill="#333">平</text>
<text x="1652.9" y="519.0" text-anchor="middle" font-size="12" fill="#fff" xml:space="preserve">23201.25  79.94%</text>
<path d="M1578.8 559.1L1727.0 559.1L1707.2 613.4L1598.6 613.4Z" fill="#05a8a6"/>
<path d="M1717.1 586.2H1767.1" stroke="#555" stroke-width="1"/>
<text x="1771.1" y="589.9" font-size="12" fill="#333">峰</text>
<text x="1652.9" y="588.5" text-anchor="middle" font-size="12" fill="#fff" xml:space="preserve">5612  19.34%</text>
<path d="M1598.6 628.0L1707.2 628.0L1707.2 682.3L1598.6 682.3Z" fill="#05a8a6"/>
<path d="M1707.2 655.1H1757.2" stroke="#555" stroke-width="1"/>
<text x="1761.2" y="658.8" font-size="12" fill="#333">谷</text>
<text x="1652.9" y="659.4" text-anchor="middle" font-size="12" fill="#fff" xml:space="preserve">208.92  0.72%</text>
<path d="M1598.6 697.5L1707.2 697.5L1707.2 751.8L1598.6 751.8Z" fill="#05a8a6"/>
<path d="M1707.2 724.6H1757.2" stroke="#555" stroke-width="1"/>
<text x="1761.2" y="728.2" font-size="12" fill="#333">尖</text>
<text x="1652.9" y="727.9" text-anchor="middle" font-size="12" fill="#fff" xml:space="preserve">0  0.00%</text>
<path d="M1598.6 767.0L1707.2 767.0L1707.2 821.3L1598.6 821.3Z" fill="#05a8a6"/>
<path d="M1707.2 794.1H1757.2" stroke="#555" stroke-width="1"/>
<text x="1761.2" y="797.8" font-size="12" fill="#333">深谷</text>
<text x="1652.9" y="797.4" text-anchor="middle" font-size="12" fill="#fff" xml:space="preserve">0  0.00%</text>
</svg>
  <!-- /FUNNEL -->
  <div class="card" style="top:905px;height:60px"></div>
  <!-- TABLE -->
  <div class="th" style="left:245px">电能类型</div>
  <div class="th" style="left:428px">单价（¥/kWh)</div>
  <div class="th" style="left:611px">电量（kW·h)</div>
  <div class="th" style="left:794px">成本（¥/kWh)</div>
  <div class="th" style="left:977px">容量电费（¥/kWh)</div>
  <div class="th" style="left:1160px">需量电费（¥/kWh)</div>
  <div class="th" style="left:1343px">合计</div>
  <div class="th" style="left:1526px">同比</div>
  <div class="th" style="left:1709px">环比</div>
  <div id="sb"></div>
</div>
</body>
</html>
